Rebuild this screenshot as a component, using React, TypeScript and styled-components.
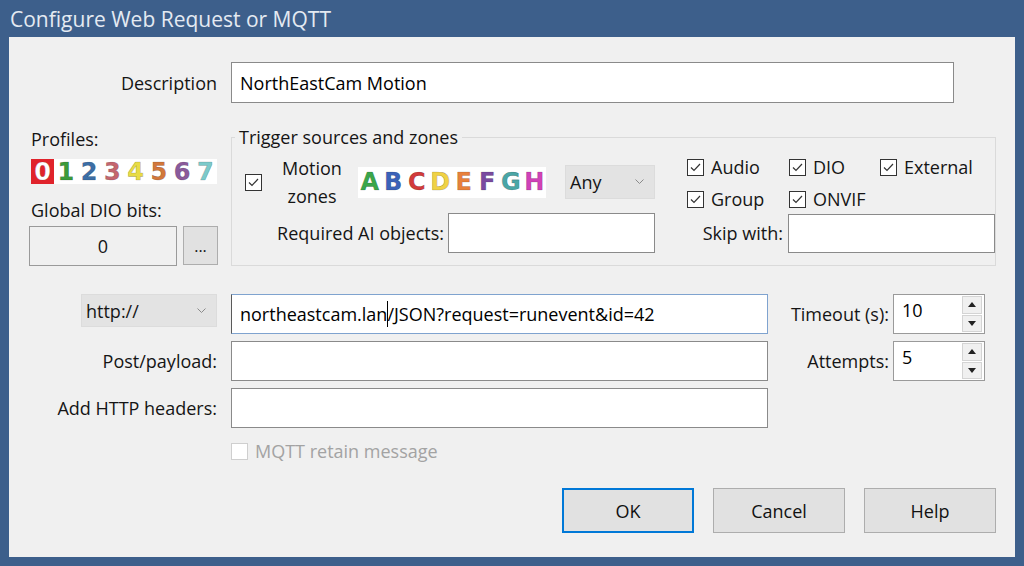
import * as React from 'react';
import styled, { createGlobalStyle } from 'styled-components';

const GlobalStyle = createGlobalStyle`
  html, body {
    margin: 0;
    padding: 0;
    background: #3d5f8b;
  }
  body {
    font-family: 'Open Sans', 'Noto Sans', sans-serif;
  }
`;

const Window = styled.div`
  width: 1024px;
  height: 566px;
  background: #3d5f8b;
  display: flex;
  flex-direction: column;
  overflow: hidden;
`;

const TitleBar = styled.div`
  height: 37px;
  display: flex;
  align-items: center;
  padding-left: 10px;
  color: #e4eaf2;
  font-size: 21px;
`;

const Body = styled.div`
  flex: 1;
  margin: 0 9px 9px 9px;
  background: #f0f0f0;
  padding: 25px 0 0 20px;
  display: flex;
  flex-direction: column;
  color: #151515;
  font-size: 18px;
`;

const FormRow = styled.div`
  display: grid;
  grid-template-columns: 188px 723px;
  column-gap: 14px;
  align-items: center;
`;

const Label = styled.span`
  text-align: right;
  white-space: nowrap;
`;

const TextBox = styled.div<{ $w?: number; $h?: number; $focused?: boolean }>`
  box-sizing: border-box;
  width: ${p => (p.$w ? `${p.$w}px` : '100%')};
  height: ${p => p.$h ?? 40}px;
  background: #fff;
  border: 1px solid ${p => (p.$focused ? '#7fa3cf' : '#8a8a8a')};
  border-left-color: ${p => (p.$focused ? '#5a5a5a' : '#8a8a8a')};
  padding: 0 8px;
  display: flex;
  align-items: center;
  font-size: 18px;
  color: #000;
  white-space: nowrap;
  overflow: hidden;
`;

const Caret = styled.span`
  display: inline-block;
  width: 1px;
  height: 26px;
  background: #000;
  margin: 0 -1px 0 0;
`;

const Middle = styled.div`
  display: flex;
  gap: 13px;
  margin-top: 22px;
`;

const ProfileCol = styled.div`
  width: 189px;
  display: flex;
  flex-direction: column;
`;

const SmallLabel = styled.div<{ $top: number }>`
  padding-left: 2px;
  margin-top: ${p => p.$top}px;
  line-height: 22px;
`;

const GlyphStrip = styled.div<{ $w: number; $h: number; $left?: number; $top?: number }>`
  width: ${p => p.$w}px;
  height: ${p => p.$h}px;
  margin-left: ${p => p.$left ?? 0}px;
  margin-top: ${p => p.$top ?? 0}px;
  background: #fff;
  display: flex;
  align-items: center;
  flex: none;
  font-family: 'DejaVu Sans', 'Liberation Sans', sans-serif;
  font-weight: 700;
`;

const Glyph = styled.span<{ $color: string; $bg?: string; $size: number; $cell: number }>`
  width: ${p => p.$cell}px;
  height: 100%;
  display: flex;
  align-items: center;
  justify-content: center;
  font-size: ${p => p.$size}px;
  color: ${p => p.$color};
  background: ${p => p.$bg ?? 'transparent'};
  -webkit-text-stroke: 0.6px rgba(0, 0, 0, 0.25);
`;

const DioRow = styled.div`
  display: flex;
  gap: 6px;
  margin-top: 5px;
`;

const DioBox = styled.div`
  box-sizing: border-box;
  width: 148px;
  height: 40px;
  border: 1px solid #9a9a9a;
  background: #f0f0f0;
  display: flex;
  align-items: center;
  justify-content: center;
  font-size: 18px;
`;

const DotsButton = styled.div`
  box-sizing: border-box;
  width: 35px;
  height: 39px;
  border: 1px solid #adadad;
  background: #e1e1e1;
  display: flex;
  align-items: flex-end;
  justify-content: center;
  padding-bottom: 7px;
  font-size: 16px;
`;

const Group = styled.fieldset`
  box-sizing: border-box;
  width: 765px;
  height: 141px;
  margin: 0;
  padding: 0 0 12px 0;
  border: 1px solid #dadada;
  min-inline-size: auto;
`;

const GroupTitle = styled.legend`
  margin-left: 3px;
  padding: 0 4px;
  line-height: 24px;
  font-size: 18px;
`;

const GroupGrid = styled.div`
  display: grid;
  grid-template-columns: 410px 307px;
  grid-template-rows: 58px 40px;
  column-gap: 33px;
  row-gap: 2px;
  padding: 4px 0 0 13px;
`;

const MotionRow = styled.div`
  display: flex;
  align-items: center;
`;

const MotionLabel = styled.div`
  width: 72px;
  margin: 0 10px 0 14px;
  text-align: center;
  line-height: 28px;
`;

const SourceChecks = styled.div`
  display: grid;
  grid-template-columns: 102px 91px auto;
  grid-auto-rows: 24px;
  row-gap: 8px;
  padding-top: 2px;
  margin-left: -1px;
`;

const CheckItem = styled.label<{ $disabled?: boolean }>`
  display: flex;
  align-items: center;
  gap: 7px;
  white-space: nowrap;
  color: ${p => (p.$disabled ? '#a3a3a3' : 'inherit')};
`;

const CheckFrame = styled.span<{ $disabled?: boolean }>`
  box-sizing: border-box;
  width: 17px;
  height: 17px;
  flex: none;
  border: 1px solid ${p => (p.$disabled ? '#cfcfcf' : '#333')};
  background: #fff;
  display: inline-flex;
  align-items: center;
  justify-content: center;
`;

const InlineField = styled.div<{ $gap: number }>`
  display: flex;
  align-items: center;
  justify-content: flex-end;
  gap: ${p => p.$gap}px;
`;

const Combo = styled.div<{ $w: number; $h: number; $left?: number }>`
  box-sizing: border-box;
  width: ${p => p.$w}px;
  height: ${p => p.$h}px;
  margin-left: ${p => p.$left ?? 0}px;
  background: #e3e3e3;
  border: 1px solid #dcdcdc;
  display: flex;
  align-items: center;
  justify-content: space-between;
  padding: 0 10px 0 4px;
  flex: none;
  align-self: start;
  justify-self: end;
`;

const ZoneCombo = styled(Combo)`
  align-self: center;
`;

const RequestSection = styled.div`
  display: flex;
  margin-top: 28px;
`;

const RequestGrid = styled.div`
  display: grid;
  grid-template-columns: 188px 537px;
  grid-auto-rows: 40px;
  column-gap: 14px;
  row-gap: 7px;
  align-items: center;
`;

const RetryGrid = styled.div`
  width: 217px;
  display: grid;
  grid-template-columns: 1fr 92px;
  grid-auto-rows: 40px;
  column-gap: 4px;
  row-gap: 7px;
  align-items: center;
`;

const SpinBox = styled.div`
  box-sizing: border-box;
  height: 40px;
  background: #fff;
  border: 1px solid #9a9a9a;
  display: flex;
`;

const SpinValue = styled.span`
  flex: 1;
  padding: 3px 0 0 8px;
  font-size: 18px;
  color: #000;
`;

const SpinButtons = styled.div`
  width: 20px;
  margin: 1px 2px 1px 0;
  display: flex;
  flex-direction: column;
  gap: 1px;
`;

const SpinButton = styled.div`
  flex: 1;
  background: #f0f0f0;
  border: 1px solid #d4d4d4;
  display: flex;
  align-items: center;
  justify-content: center;
`;

const RetainRow = styled.div`
  margin: 11px 0 0 202px;
`;

const ButtonRow = styled.div`
  margin-top: auto;
  margin-bottom: 24px;
  padding-right: 19px;
  display: flex;
  justify-content: flex-end;
  gap: 19px;
`;

const DialogButton = styled.div<{ $default?: boolean }>`
  box-sizing: border-box;
  width: 132px;
  height: 45px;
  background: #e1e1e1;
  border: 1px solid ${p => (p.$default ? '#0078d7' : '#adadad')};
  box-shadow: ${p => (p.$default ? 'inset 0 0 0 1px #0078d7' : 'none')};
  display: flex;
  align-items: center;
  justify-content: center;
  color: #111;
`;

const Chevron = () => (
  <svg width="9" height="6" viewBox="0 0 9 6">
    <polyline points="0.5,0.5 4.5,4.5 8.5,0.5" fill="none" stroke="#8a8a8a" strokeWidth="1" />
  </svg>
);

const Triangle = ({ up }: { up?: boolean }) => (
  <svg width="8" height="5" viewBox="0 0 8 5">
    <polygon points={up ? '0,5 4,0 8,5' : '0,0 4,5 8,0'} fill="#222" />
  </svg>
);

const CheckBox = ({ checked, disabled }: { checked?: boolean; disabled?: boolean }) => (
  <CheckFrame $disabled={disabled}>
    {checked && (
      <svg width="13" height="13" viewBox="0 0 13 13">
        <polyline points="2,6.5 5,9.5 11,3" fill="none" stroke="#333" strokeWidth="1.2" />
      </svg>
    )}
  </CheckFrame>
);

const Spinner = ({ value }: { value: string }) => (
  <SpinBox>
    <SpinValue>{value}</SpinValue>
    <SpinButtons>
      <SpinButton><Triangle up /></SpinButton>
      <SpinButton><Triangle /></SpinButton>
    </SpinButtons>
  </SpinBox>
);

const profiles = [
  { ch: '0', color: '#ffffff', bg: '#e0232b' },
  { ch: '1', color: '#3b9a3b' },
  { ch: '2', color: '#3c6ea6' },
  { ch: '3', color: '#c4666f' },
  { ch: '4', color: '#e9dc45' },
  { ch: '5', color: '#d2773a' },
  { ch: '6', color: '#8a5a9b' },
  { ch: '7', color: '#7ccaca' },
];

const zones = [
  { ch: 'A', color: '#3aa64a' },
  { ch: 'B', color: '#3b62b8' },
  { ch: 'C', color: '#d23b3b' },
  { ch: 'D', color: '#f0d244' },
  { ch: 'E', color: '#e8803c' },
  { ch: 'F', color: '#7a4aa0' },
  { ch: 'G', color: '#4aa6a6' },
  { ch: 'H', color: '#d042b8' },
];

const sources = ['Audio', 'DIO', 'External', 'Group', 'ONVIF'];

export default function App() {
  return (
    <Window>
      <GlobalStyle />
      <TitleBar>Configure Web Request or MQTT</TitleBar>
      <Body>
        <FormRow>
          <Label>Description</Label>
          <TextBox $h={41}>NorthEastCam Motion</TextBox>
        </FormRow>

        <Middle>
          <ProfileCol>
            <SmallLabel $top={3}>Profiles:</SmallLabel>
            <GlyphStrip $w={186} $h={25} $left={2} $top={9}>
              {profiles.map(p => (
                <Glyph key={p.ch} $color={p.color} $bg={p.bg} $size={24} $cell={23.25}>{p.ch}</Glyph>
              ))}
            </GlyphStrip>
            <SmallLabel $top={15}>Global DIO bits:</SmallLabel>
            <DioRow>
              <DioBox>0</DioBox>
              <DotsButton>...</DotsButton>
            </DioRow>
          </ProfileCol>

          <Group>
            <GroupTitle>Trigger sources and zones</GroupTitle>
            <GroupGrid>
              <MotionRow>
                <CheckBox checked />
                <MotionLabel>Motion<br />zones</MotionLabel>
                <GlyphStrip $w={188} $h={31}>
                  {zones.map(z => (
                    <Glyph key={z.ch} $color={z.color} $size={24} $cell={23.5}>{z.ch}</Glyph>
                  ))}
                </GlyphStrip>
                <ZoneCombo $w={90} $h={34} $left={19}>
                  Any <Chevron />
                </ZoneCombo>
              </MotionRow>
              <SourceChecks>
                {sources.map(name => (
                  <CheckItem key={name}>
                    <CheckBox checked />
                    {name}
                  </CheckItem>
                ))}
              </SourceChecks>
              <InlineField $gap={4}>
                <Label>Required AI objects:</Label>
                <TextBox $w={207} />
              </InlineField>
              <InlineField $gap={5}>
                <Label>Skip with:</Label>
                <TextBox $w={207} $h={39} />
              </InlineField>
            </GroupGrid>
          </Group>
        </Middle>

        <RequestSection>
          <RequestGrid>
            <Combo $w={136} $h={33}>
              http:// <Chevron />
            </Combo>
            <TextBox $focused>
              northeastcam.lan<Caret />/JSON?request=runevent&amp;id=42
            </TextBox>
            <Label>Post/payload:</Label>
            <TextBox />
            <Label>Add HTTP headers:</Label>
            <TextBox />
          </RequestGrid>
          <RetryGrid>
            <Label>Timeout (s):</Label>
            <Spinner value="10" />
            <Label>Attempts:</Label>
            <Spinner value="5" />
          </RetryGrid>
        </RequestSection>

        <RetainRow>
          <CheckItem $disabled>
            <CheckBox disabled />
            MQTT retain message
          </CheckItem>
        </RetainRow>

        <ButtonRow>
          <DialogButton $default>OK</DialogButton>
          <DialogButton>Cancel</DialogButton>
          <DialogButton>Help</DialogButton>
        </ButtonRow>
      </Body>
    </Window>
  );
}
